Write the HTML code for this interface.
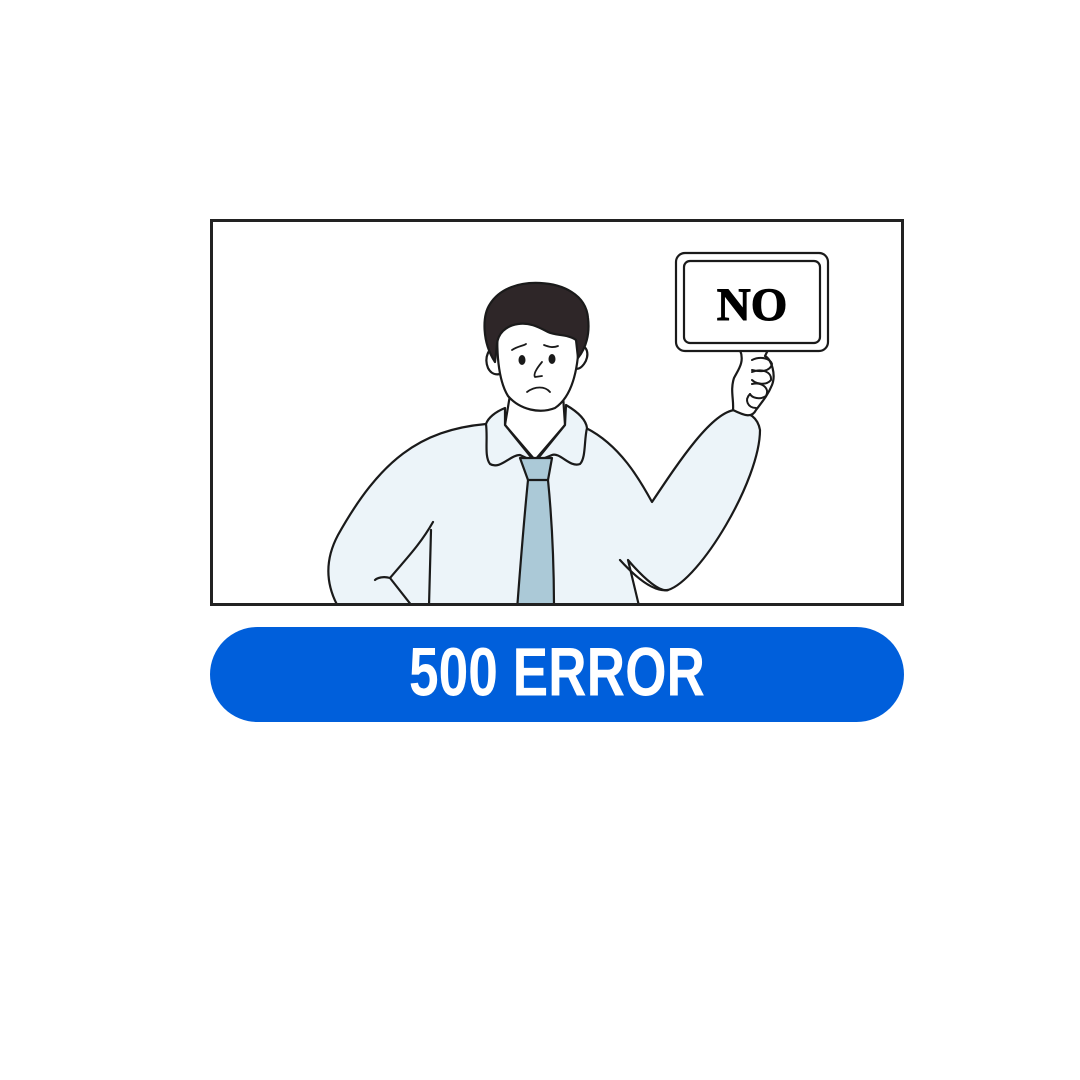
<!DOCTYPE html>
<html><head><meta charset="utf-8"><style>
html,body{margin:0;padding:0;background:#fff;width:1080px;height:1080px;overflow:hidden}
</style></head><body>
<svg width="1080" height="1080" viewBox="0 0 1080 1080" xmlns="http://www.w3.org/2000/svg">
<defs><clipPath id="c"><rect x="213" y="222" width="688" height="382"/></clipPath></defs>
<rect x="0" y="0" width="1080" height="1080" fill="#fff"/>
<g clip-path="url(#c)" stroke="#1a1a1a" stroke-width="2.2" stroke-linejoin="round" stroke-linecap="round">
  <path d="M486 424 C420 430 380 460 338 535 C322 565 328 590 340 610 L640 610 L628 560 C645 580 660 592 668 590 C700 580 760 480 760 430 C758 418 750 412 735 410 C712 412 680 460 652 502 C640 480 620 445 586 428 Z" fill="#ecf4f9"/>
  <path d="M620 560 C640 582 656 592 668 590" fill="none"/>
  <path d="M433 522 C420 545 405 560 390 578 C383 576 377 578 375 580" fill="none"/>
  <path d="M390 578 L412 606" fill="none"/>
  <path d="M431 530 L429 606" fill="none"/>
  <path d="M510 395 L505 425 L535 460 L565 425 L563 395 Z" fill="#fff"/>
  <path d="M505 408 C495 412 488 418 486 424 C488 440 484 456 490 464 C500 470 510 455 520 455 L535 462 L505 425 Z" fill="#ecf4f9"/>
  <path d="M566 405 C578 412 586 420 587 428 C584 440 586 458 580 464 C570 468 560 452 552 455 L535 462 L565 425 Z" fill="#ecf4f9"/>
  <path d="M520 458 L552 458 L548 480 C552 520 554 570 554 610 L517 610 C520 570 524 520 528 480 Z" fill="#abc9d7"/>
  <path d="M528 480 L548 480" fill="none"/>
  <path d="M740 350 C745 362 738 370 734 378 C730 390 734 400 733 410 C745 416 752 418 756 410 C762 402 768 395 772 385 C776 375 772 360 765 356 L768 350" fill="#fff"/>
  <path d="M752 360 C760 356 770 358 772 364 C770 372 760 372 752 370 M752 372 C762 368 772 372 771 380 C766 386 756 384 752 380 M752 384 C762 382 770 388 766 396 C760 400 752 398 750 394" fill="none" stroke-width="2"/>
  <path d="M750 394 C744 400 748 408 756 408" fill="none" stroke-width="2"/>
  <path d="M498 348 C488 346 484 358 488 368 C491 374 496 375 500 374" fill="#fff"/>
  <path d="M578 346 C588 344 590 356 584 364 C581 368 578 370 575 368" fill="#fff"/>
  <path d="M498 322 C496 350 498 380 508 396 C520 410 540 414 555 408 C570 398 578 375 579 340 C570 320 520 315 498 322 Z" fill="#fff"/>
  <path d="M495 362 C482 342 482 316 490 304 C500 288 520 282 540 283 C562 284 586 294 588 318 C590 334 586 348 578 358 L576 340 C568 334 556 336 548 332 C540 328 530 322 518 324 C505 326 498 334 497 344 Z" fill="#2e2628"/>
  <path d="M512 350 C518 346 523 346 526 344 M544 345 C549 347 553 348 558 346" fill="none" stroke-width="1.8"/>
  <ellipse cx="522" cy="360" rx="3.5" ry="5" fill="#1a1a1a" stroke="none"/>
  <ellipse cx="552" cy="359" rx="3.5" ry="5" fill="#1a1a1a" stroke="none"/>
  <path d="M542 362 C537 368 533 374 535 377 L542 376" fill="none" stroke-width="1.8"/>
  <path d="M527 392 C535 386 545 386 550 392" fill="none" stroke-width="1.8"/>
  <rect x="676" y="253" width="152" height="98" rx="9" fill="#fff"/>
  <rect x="684" y="261" width="136" height="82" rx="6" fill="#fff"/>
</g>
<text x="752" y="320" text-anchor="middle" font-family="'Liberation Serif',serif" font-weight="bold" font-size="47" fill="#000" stroke="#000" stroke-width="1">NO</text>
<rect x="211.5" y="220.5" width="691" height="384" fill="none" stroke="#222" stroke-width="3"/>
<rect x="210" y="627" width="694" height="95" rx="47.5" fill="#005fdb"/>
<text x="557" y="696" text-anchor="middle" font-family="'Liberation Sans Narrow','Liberation Sans',sans-serif" font-weight="bold" font-size="62" fill="#fff" textLength="296" lengthAdjust="spacingAndGlyphs" transform="translate(0,-70) scale(1,1.1)">500 ERROR</text>
</svg>
</body></html>
